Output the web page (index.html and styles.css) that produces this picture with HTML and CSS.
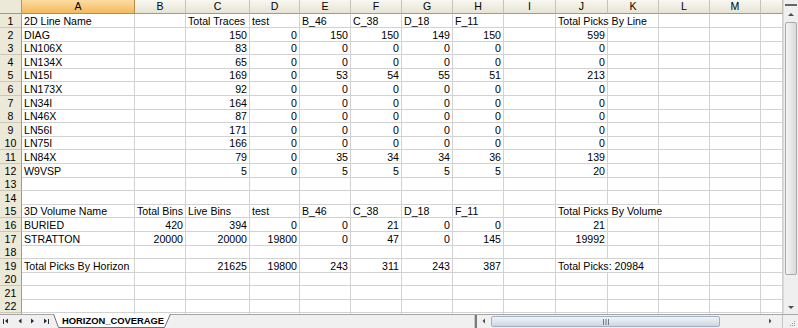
FILE: index.html
```html
<!DOCTYPE html>
<html>
<head>
<meta charset="utf-8">
<link rel="stylesheet" href="styles.css">
</head>
<body>
<div class="window">
  <div class="sheet">
    <div class="row hrow"><div class="corner"></div><div class="ch sel">A</div><div class="ch">B</div><div class="ch">C</div><div class="ch">D</div><div class="ch">E</div><div class="ch">F</div><div class="ch">G</div><div class="ch">H</div><div class="ch">I</div><div class="ch">J</div><div class="ch">K</div><div class="ch">L</div><div class="ch">M</div><div class="ch"></div></div>
    <div class="row"><div class="rh">1</div><div class="c">2D Line Name</div><div class="c"></div><div class="c">Total Traces</div><div class="c">test</div><div class="c">B_46</div><div class="c">C_38</div><div class="c">D_18</div><div class="c">F_11</div><div class="c"></div><div class="c ov">Total Picks By Line</div><div class="c"></div><div class="c"></div><div class="c"></div><div class="c"></div></div>
    <div class="row"><div class="rh">2</div><div class="c">DIAG</div><div class="c"></div><div class="c n">150</div><div class="c n">0</div><div class="c n">150</div><div class="c n">150</div><div class="c n">149</div><div class="c n">150</div><div class="c"></div><div class="c n">599</div><div class="c"></div><div class="c"></div><div class="c"></div><div class="c"></div></div>
    <div class="row"><div class="rh">3</div><div class="c">LN106X</div><div class="c"></div><div class="c n">83</div><div class="c n">0</div><div class="c n">0</div><div class="c n">0</div><div class="c n">0</div><div class="c n">0</div><div class="c"></div><div class="c n">0</div><div class="c"></div><div class="c"></div><div class="c"></div><div class="c"></div></div>
    <div class="row"><div class="rh">4</div><div class="c">LN134X</div><div class="c"></div><div class="c n">65</div><div class="c n">0</div><div class="c n">0</div><div class="c n">0</div><div class="c n">0</div><div class="c n">0</div><div class="c"></div><div class="c n">0</div><div class="c"></div><div class="c"></div><div class="c"></div><div class="c"></div></div>
    <div class="row"><div class="rh">5</div><div class="c">LN15I</div><div class="c"></div><div class="c n">169</div><div class="c n">0</div><div class="c n">53</div><div class="c n">54</div><div class="c n">55</div><div class="c n">51</div><div class="c"></div><div class="c n">213</div><div class="c"></div><div class="c"></div><div class="c"></div><div class="c"></div></div>
    <div class="row"><div class="rh">6</div><div class="c">LN173X</div><div class="c"></div><div class="c n">92</div><div class="c n">0</div><div class="c n">0</div><div class="c n">0</div><div class="c n">0</div><div class="c n">0</div><div class="c"></div><div class="c n">0</div><div class="c"></div><div class="c"></div><div class="c"></div><div class="c"></div></div>
    <div class="row"><div class="rh">7</div><div class="c">LN34I</div><div class="c"></div><div class="c n">164</div><div class="c n">0</div><div class="c n">0</div><div class="c n">0</div><div class="c n">0</div><div class="c n">0</div><div class="c"></div><div class="c n">0</div><div class="c"></div><div class="c"></div><div class="c"></div><div class="c"></div></div>
    <div class="row"><div class="rh">8</div><div class="c">LN46X</div><div class="c"></div><div class="c n">87</div><div class="c n">0</div><div class="c n">0</div><div class="c n">0</div><div class="c n">0</div><div class="c n">0</div><div class="c"></div><div class="c n">0</div><div class="c"></div><div class="c"></div><div class="c"></div><div class="c"></div></div>
    <div class="row"><div class="rh">9</div><div class="c">LN56I</div><div class="c"></div><div class="c n">171</div><div class="c n">0</div><div class="c n">0</div><div class="c n">0</div><div class="c n">0</div><div class="c n">0</div><div class="c"></div><div class="c n">0</div><div class="c"></div><div class="c"></div><div class="c"></div><div class="c"></div></div>
    <div class="row"><div class="rh">10</div><div class="c">LN75I</div><div class="c"></div><div class="c n">166</div><div class="c n">0</div><div class="c n">0</div><div class="c n">0</div><div class="c n">0</div><div class="c n">0</div><div class="c"></div><div class="c n">0</div><div class="c"></div><div class="c"></div><div class="c"></div><div class="c"></div></div>
    <div class="row"><div class="rh">11</div><div class="c">LN84X</div><div class="c"></div><div class="c n">79</div><div class="c n">0</div><div class="c n">35</div><div class="c n">34</div><div class="c n">34</div><div class="c n">36</div><div class="c"></div><div class="c n">139</div><div class="c"></div><div class="c"></div><div class="c"></div><div class="c"></div></div>
    <div class="row"><div class="rh">12</div><div class="c">W9VSP</div><div class="c"></div><div class="c n">5</div><div class="c n">0</div><div class="c n">5</div><div class="c n">5</div><div class="c n">5</div><div class="c n">5</div><div class="c"></div><div class="c n">20</div><div class="c"></div><div class="c"></div><div class="c"></div><div class="c"></div></div>
    <div class="row"><div class="rh">13</div><div class="c"></div><div class="c"></div><div class="c"></div><div class="c"></div><div class="c"></div><div class="c"></div><div class="c"></div><div class="c"></div><div class="c"></div><div class="c"></div><div class="c"></div><div class="c"></div><div class="c"></div><div class="c"></div></div>
    <div class="row"><div class="rh">14</div><div class="c"></div><div class="c"></div><div class="c"></div><div class="c"></div><div class="c"></div><div class="c"></div><div class="c"></div><div class="c"></div><div class="c"></div><div class="c"></div><div class="c"></div><div class="c"></div><div class="c"></div><div class="c"></div></div>
    <div class="row"><div class="rh">15</div><div class="c">3D Volume Name</div><div class="c">Total Bins</div><div class="c">Live Bins</div><div class="c">test</div><div class="c">B_46</div><div class="c">C_38</div><div class="c">D_18</div><div class="c">F_11</div><div class="c"></div><div class="c ov">Total Picks By Volume</div><div class="c ov"></div><div class="c"></div><div class="c"></div><div class="c"></div></div>
    <div class="row"><div class="rh">16</div><div class="c">BURIED</div><div class="c n">420</div><div class="c n">394</div><div class="c n">0</div><div class="c n">0</div><div class="c n">21</div><div class="c n">0</div><div class="c n">0</div><div class="c"></div><div class="c n">21</div><div class="c"></div><div class="c"></div><div class="c"></div><div class="c"></div></div>
    <div class="row"><div class="rh">17</div><div class="c">STRATTON</div><div class="c n">20000</div><div class="c n">20000</div><div class="c n">19800</div><div class="c n">0</div><div class="c n">47</div><div class="c n">0</div><div class="c n">145</div><div class="c"></div><div class="c n">19992</div><div class="c"></div><div class="c"></div><div class="c"></div><div class="c"></div></div>
    <div class="row"><div class="rh">18</div><div class="c"></div><div class="c"></div><div class="c"></div><div class="c"></div><div class="c"></div><div class="c"></div><div class="c"></div><div class="c"></div><div class="c"></div><div class="c"></div><div class="c"></div><div class="c"></div><div class="c"></div><div class="c"></div></div>
    <div class="row"><div class="rh">19</div><div class="c">Total Picks By Horizon</div><div class="c"></div><div class="c n">21625</div><div class="c n">19800</div><div class="c n">243</div><div class="c n">311</div><div class="c n">243</div><div class="c n">387</div><div class="c"></div><div class="c ov">Total Picks: 20984</div><div class="c"></div><div class="c"></div><div class="c"></div><div class="c"></div></div>
    <div class="row"><div class="rh">20</div><div class="c"></div><div class="c"></div><div class="c"></div><div class="c"></div><div class="c"></div><div class="c"></div><div class="c"></div><div class="c"></div><div class="c"></div><div class="c"></div><div class="c"></div><div class="c"></div><div class="c"></div><div class="c"></div></div>
    <div class="row"><div class="rh">21</div><div class="c"></div><div class="c"></div><div class="c"></div><div class="c"></div><div class="c"></div><div class="c"></div><div class="c"></div><div class="c"></div><div class="c"></div><div class="c"></div><div class="c"></div><div class="c"></div><div class="c"></div><div class="c"></div></div>
    <div class="row"><div class="rh">22</div><div class="c"></div><div class="c"></div><div class="c"></div><div class="c"></div><div class="c"></div><div class="c"></div><div class="c"></div><div class="c"></div><div class="c"></div><div class="c"></div><div class="c"></div><div class="c"></div><div class="c"></div><div class="c"></div></div>
    <div class="row"><div class="rh"></div><div class="c"></div><div class="c"></div><div class="c"></div><div class="c"></div><div class="c"></div><div class="c"></div><div class="c"></div><div class="c"></div><div class="c"></div><div class="c"></div><div class="c"></div><div class="c"></div><div class="c"></div><div class="c"></div></div>
  </div>

  <div class="vscroll">
    <div class="vsplit"></div>
    <div class="varr"><svg width="14" height="14" viewBox="0 0 14 14"><polygon points="4,9 10,9 7,6" fill="#4d4d4d"/></svg></div>
    <div class="vthumb"></div>
    <div class="vtrack"></div>
    <div class="varr"><svg width="14" height="14" viewBox="0 0 14 14"><polygon points="4,6 10,6 7,9" fill="#4d4d4d"/></svg></div>
  </div>

  <div class="bar">
    <div class="nav">
      <svg width="53" height="13" viewBox="0 0 53 13">
        <rect x="3" y="4" width="1" height="5" fill="#2b2b3b"/>
        <polygon points="8,3.5 8,8.5 5,6" fill="#2b2b3b"/>
        <polygon points="21.5,3.5 21.5,8.5 18.5,6" fill="#2b2b3b"/>
        <polygon points="31,3.5 31,8.5 34,6" fill="#2b2b3b"/>
        <polygon points="44,3.5 44,8.5 47,6" fill="#2b2b3b"/>
        <rect x="48" y="4" width="1" height="5" fill="#2b2b3b"/>
      </svg>
    </div>
    <div class="tab">
      <svg class="tabshape" width="118" height="14" viewBox="0 0 118 14">
        <polygon points="0,0 5,13.5 112,13.5 118,0" fill="#ffffff"/>
        <polyline points="0.5,0 5.5,13.5 111.5,13.5 117.5,0" fill="none" stroke="#6f6f6f" stroke-width="1"/>
      </svg>
      <span class="tablabel">HORIZON_COVERAGE</span>
    </div>
    <div class="barfill"></div>
    <div class="split"></div>
    <div class="hscroll">
      <div class="harr"><svg width="14" height="13" viewBox="0 0 14 13"><polygon points="8,3.5 8,8.5 5.5,6" fill="#4d4d4d"/></svg></div>
      <div class="hthumb"><svg width="8" height="6" viewBox="0 0 8 6"><rect x="1" y="0" width="1" height="6" fill="#6c7a8a"/><rect x="3.5" y="0" width="1" height="6" fill="#6c7a8a"/><rect x="6" y="0" width="1" height="6" fill="#6c7a8a"/></svg></div>
      <div class="htrack"></div>
      <div class="harr"><svg width="14" height="13" viewBox="0 0 14 13"><polygon points="6,3.5 6,8.5 8.5,6" fill="#4d4d4d"/></svg></div>
      <div class="hend"></div>
    </div>
    <div class="grip"><svg width="15" height="13" viewBox="0 0 15 13"><rect x="11" y="10" width="1" height="1" fill="#9a9a9a"/><rect x="9" y="10" width="1" height="1" fill="#9a9a9a"/><rect x="11" y="8" width="1" height="1" fill="#9a9a9a"/><rect x="7" y="10" width="1" height="1" fill="#9a9a9a"/><rect x="9" y="8" width="1" height="1" fill="#9a9a9a"/><rect x="11" y="6" width="1" height="1" fill="#9a9a9a"/></svg></div>
  </div>
</div>
</body>
</html>
```

FILE: styles.css
```css
* {
  box-sizing: border-box;
  margin: 0;
  padding: 0;
}

html, body {
  width: 798px;
  height: 328px;
  overflow: hidden;
  background: #ffffff;
}

body {
  font-family: "Liberation Sans", Arial, sans-serif;
  font-size: 10.6px;
  color: #000000;
}

.window {
  display: grid;
  grid-template-columns: 783px 15px;
  grid-template-rows: 314px 14px;
  width: 798px;
  height: 328px;
}

.sheet {
  overflow: hidden;
  background: #ffffff;
}

.row {
  display: grid;
  grid-template-columns: 22px 113px 51px 64px 50px 51px 51px 51px 51px 52px 52px 51px 51px 51px 22px;
  height: 13.6px;
}

.hrow {
  height: 14px;
}

.c {
  min-width: 0;
  border-right: 1px solid #d2d2d2;
  border-bottom: 1px solid #d2d2d2;
  padding: 1px 2px 0 2px;
  line-height: 12px;
  white-space: nowrap;
}

.n {
  text-align: right;
}

.ov {
  border-right-color: transparent;
}

.rh {
  background: #ece9d8;
  border-right: 1px solid #9e9b8c;
  border-bottom: 1px solid #cbc7b6;
  text-align: center;
  padding-top: 1px;
  line-height: 12px;
}

.corner {
  background: #ece9d8;
  border-right: 1px solid #9e9b8c;
  border-bottom: 1px solid #9e9b8c;
}

.ch {
  background: linear-gradient(#f8f7f1, #e7e4d4);
  border-right: 1px solid #c6c3b2;
  border-bottom: 1px solid #9e9b8c;
  text-align: center;
  line-height: 13px;
}

.ch.sel {
  background: linear-gradient(#fcdca3, #f3b95e);
  border-right-color: #b98a45;
  border-bottom-color: #c48b3c;
}

/* vertical scrollbar */
.vscroll {
  display: flex;
  flex-direction: column;
  background: #efefef;
  border-left: 1px solid #d9d9d9;
}

.vsplit {
  height: 6px;
  border-top: 3px solid #efefef;
  border-bottom: 2px solid #666666;
  margin: 0 1px;
}

.varr {
  height: 15px;
  display: flex;
  align-items: center;
  justify-content: center;
}

.vthumb {
  height: 253px;
  margin: 1px 1px 0 1px;
  border: 1px solid #a9a9a9;
  border-radius: 2px;
  background: linear-gradient(to right, #f6f6f6, #e4e4e4 60%, #dadada);
}

.vtrack {
  flex: 1;
}

/* bottom bar */
.bar {
  grid-column: 1 / 3;
  display: flex;
  background: #f0f0f0;
  border-top: 1px solid #a5a5a5;
  height: 14px;
}

.nav {
  width: 53px;
  flex: none;
  display: flex;
  align-items: center;
}

.nav svg {
  display: block;
}

.tab {
  position: relative;
  width: 118px;
  flex: none;
  height: 14px;
  margin-top: -1px;
}

.tabshape {
  position: absolute;
  left: 0;
  top: 0;
}

.tablabel {
  position: relative;
  display: block;
  padding-left: 9px;
  font-weight: bold;
  font-size: 9.4px;
  line-height: 14px;
  color: #000000;
  white-space: nowrap;
}

.barfill {
  flex: 1;
}

.split {
  width: 3px;
  flex: none;
  background: #7b7b7b;
  border-left: 1px solid #c9c9c9;
}

.hscroll {
  width: 306px;
  flex: none;
  display: flex;
  border-right: 1px solid #c4c4c4;
}

.harr {
  width: 14px;
  flex: none;
  display: flex;
  align-items: center;
  justify-content: center;
}

.hthumb {
  width: 229px;
  flex: none;
  margin: 1px 0;
  border: 1px solid #a2afbe;
  border-radius: 2px;
  background: linear-gradient(#f1f4f8, #dde4ec 55%, #cdd6e0);
  display: flex;
  align-items: center;
  justify-content: center;
}

.hthumb svg {
  display: block;
}

.htrack {
  flex: 1;
}

.hend {
  width: 5px;
  flex: none;
}

.grip {
  width: 15px;
  flex: none;
}

.grip svg {
  display: block;
}
```
